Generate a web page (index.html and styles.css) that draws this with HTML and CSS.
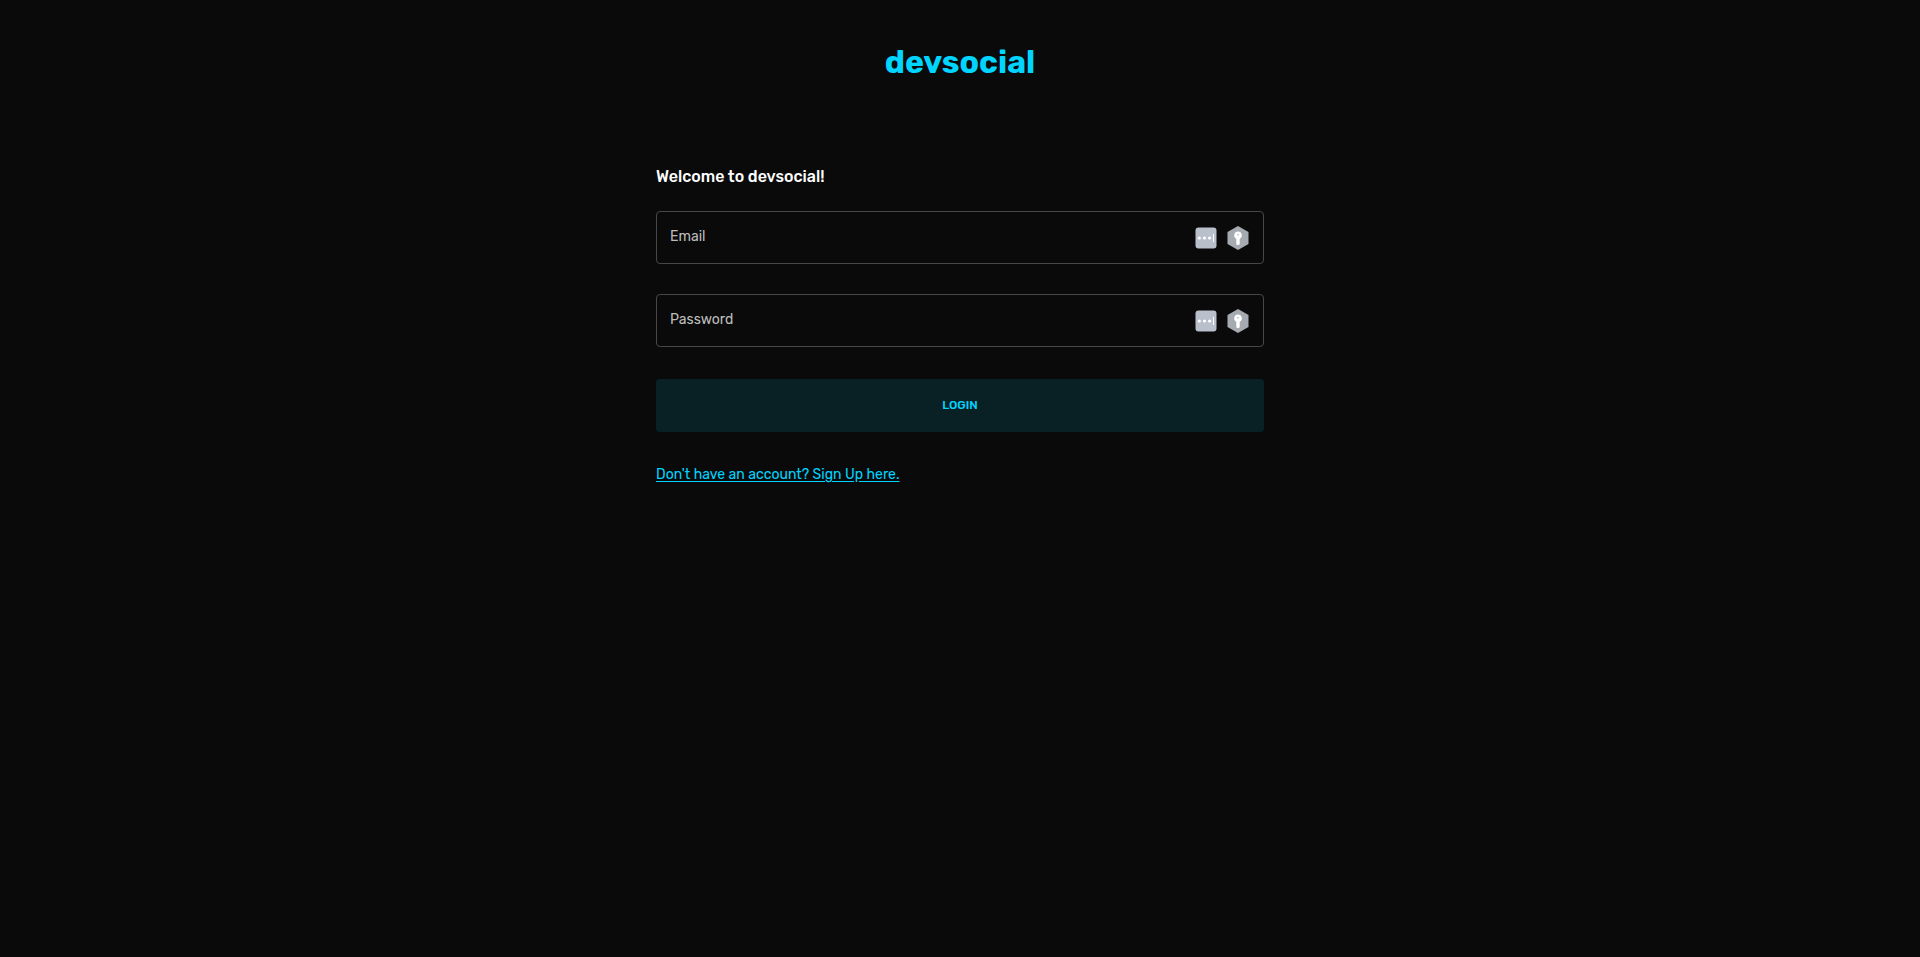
FILE: index.html
```html
<!DOCTYPE html>
<html lang="en">
<head>
<meta charset="utf-8">
<meta name="viewport" content="width=device-width, initial-scale=1">
<title>devsocial</title>
<link rel="stylesheet" href="styles.css">
</head>
<body>
<svg class="sprite" aria-hidden="true">
  <symbol id="dots" viewBox="0 0 22 22">
    <rect x=".5" y=".5" width="21" height="21" rx="3" fill="#b9c0cc"/>
    <g fill="#fff"><circle cx="4.300" cy="11" r="1.600"/><circle cx="9.500" cy="11" r="1.600"/><circle cx="14.600" cy="11" r="1.600"/><rect x="18" y="7" width="1" height="8"/></g>
  </symbol>
  <symbol id="key" viewBox="0 0 22 24">
    <path d="M11 0 21.500 6v12L11 24 .5 18V6z" fill="#a6abb1"/>
    <path fill="#fff" fill-rule="evenodd" d="M11 5.500a3.800 3.800 0 0 1 1.700 7.200V18q0 1-1.700 1t-1.700-1v-5.300A3.800 3.800 0 0 1 11 5.500zm0 2.400a.8.8 0 1 0 0 1.600.8.8 0 0 0 0-1.600z"/>
  </symbol>
</svg>
<header class="header"><h1 class="logo">devsocial</h1></header>
<main class="main">
  <h2 class="welcome">Welcome to devsocial!</h2>
  <form class="form">
    <div class="field">
      <label class="label" for="email">Email</label>
      <input class="input" id="email" type="email">
      <svg class="dots"><use href="#dots"/></svg>
      <svg class="key"><use href="#key"/></svg>
    </div>
    <div class="field">
      <label class="label" for="password">Password</label>
      <input class="input" id="password" type="password">
      <svg class="dots"><use href="#dots"/></svg>
      <svg class="key"><use href="#key"/></svg>
    </div>
    <button class="login" type="submit">LOGIN</button>
  </form>
  <a class="signup" href="#">Don't have an account? Sign Up here.</a>
</main>
</body>
</html>
```
FILE: styles.css
```css
* { box-sizing: border-box; }
body {
  margin: 0;
  min-height: 100vh;
  background: #0a0a0a;
  color: #fff;
  font-family: Rubik, Roboto, sans-serif;
  font-size: 14px;
  line-height: 20px;
}
.sprite { display: none; }
.header { padding: 41px 16px 40px; text-align: center; }
.logo {
  margin: 0;
  color: #00d5ff;
  font-size: 32px;
  line-height: 42px;
  font-weight: 700;
}
.main { max-width: 640px; margin: 0 auto; padding: 40px 16px; }
.welcome { margin: 0 0 20px; font-size: 16px; line-height: 28px; font-weight: 500; }
.form { display: grid; gap: 30px; }
.field {
  position: relative;
  display: flex;
  align-items: center;
  gap: 10px;
  height: 53px;
  padding-right: 14px;
  border: 1px solid #474747;
  border-radius: 4px;
}
.label {
  position: absolute;
  left: 13px;
  top: 15px;
  color: #bdbdbd;
  pointer-events: none;
}
.input {
  flex: 1;
  min-width: 0;
  height: 100%;
  padding: 0 13px;
  border: 0;
  outline: 0;
  background: transparent;
  color: #fff;
  font: inherit;
}
.dots { width: 22px; height: 22px; }
.key { width: 22px; height: 24px; }
.login {
  height: 53px;
  margin-top: 2px;
  padding: 0 0 2px;
  border: 0;
  border-radius: 4px;
  background: #092125;
  color: #00d5ff;
  font: inherit;
  font-size: 12px;
  font-weight: 500;
}
.signup {
  display: inline-block;
  margin-top: 33px;
  color: #00d5ff;
  font-size: 14px;
  text-underline-offset: 2px;
}
```
